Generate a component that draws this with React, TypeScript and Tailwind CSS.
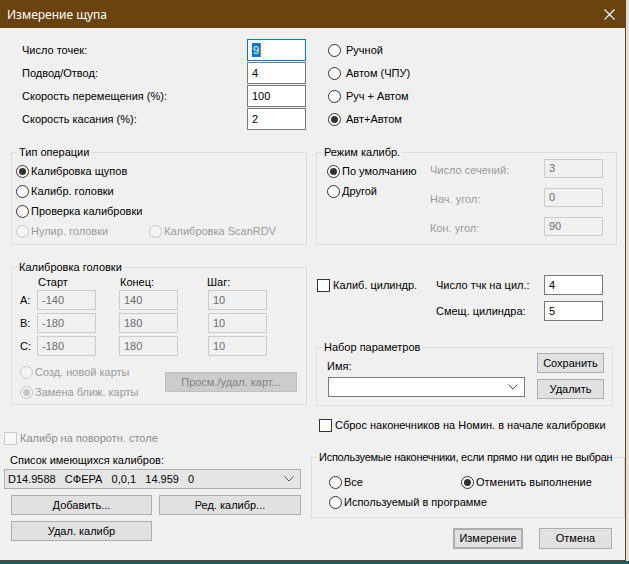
import type { ReactNode } from 'react';
import clsx from 'clsx';

const FONT = { fontFamily: '"Liberation Sans", Arial, sans-serif' };

function Radio({
  label,
  checked,
  disabled,
  gap = 'ml-[2px]',
}: {
  label: string;
  checked?: boolean;
  disabled?: boolean;
  gap?: string;
}) {
  return (
    <div className="flex h-[20px] items-center whitespace-nowrap">
      <span
        className={clsx(
          'flex h-[13px] w-[13px] shrink-0 items-center justify-center rounded-full border',
          disabled ? 'border-[#c4c4c4] bg-[#f4f4f4]' : 'border-[#333333] bg-white',
        )}
      >
        {checked && (
          <span className={clsx('h-[7px] w-[7px] rounded-full', disabled ? 'bg-[#c4c4c4]' : 'bg-[#333333]')} />
        )}
      </span>
      <span className={clsx(gap, disabled && 'text-[#9a9a9a]')}>{label}</span>
    </div>
  );
}

function Check({ label, disabled }: { label: string; disabled?: boolean }) {
  return (
    <div className="flex h-[14px] items-center whitespace-nowrap">
      <span
        className={clsx(
          'h-[13px] w-[13px] shrink-0 border',
          disabled ? 'border-[#cccccc] bg-[#f7f7f7]' : 'border-[#333333] bg-white',
        )}
      />
      <span className={clsx('ml-[3px]', disabled && 'text-[#8a8a8a]')}>{label}</span>
    </div>
  );
}

function Field({ value, disabled, h = 'h-[20px]' }: { value: string; disabled?: boolean; h?: string }) {
  return (
    <div
      className={clsx(
        'flex w-[59px] shrink-0 items-center border pl-[4px]',
        h,
        disabled ? 'border-[#cccccc] bg-[#f0f0f0] text-[#6d6d6d]' : 'border-[#7a7a7a] bg-white',
      )}
    >
      {value}
    </div>
  );
}

function Btn({ children, className, disabled }: { children: ReactNode; className?: string; disabled?: boolean }) {
  return (
    <div
      className={clsx(
        'flex h-[20px] shrink-0 items-center justify-center border',
        disabled ? 'border-[#bfbfbf] bg-[#cccccc] text-[#838383]' : 'border-[#adadad] bg-[#e1e1e1]',
        className,
      )}
    >
      {children}
    </div>
  );
}

function Chevron() {
  return (
    <svg width="10" height="6" viewBox="0 0 10 6" className="shrink-0">
      <polyline points="0.5,0.5 5,5 9.5,0.5" fill="none" stroke="#555555" strokeWidth="1" />
    </svg>
  );
}

function Group({
  title,
  className,
  titleClass,
  children,
}: {
  title: string;
  className?: string;
  titleClass?: string;
  children: ReactNode;
}) {
  return (
    <div className={clsx('border border-[#dcdcdc]', className)}>
      <div
        className={clsx(
          'relative -mt-[7px] -mb-[6px] ml-[5px] w-fit whitespace-nowrap bg-[#f0f0f0] px-[2px] leading-[13px]',
          titleClass,
        )}
      >
        {title}
      </div>
      {children}
    </div>
  );
}

const topRows = [
  { label: 'Число точек:', value: '9', radio: 'Ручной' },
  { label: 'Подвод/Отвод:', value: '4', radio: 'Автом (ЧПУ)' },
  { label: 'Скорость перемещения (%):', value: '100', radio: 'Руч + Автом' },
  { label: 'Скорость касания (%):', value: '2', radio: 'Авт+Автом', checked: true },
];

const headRows = [
  { axis: 'A:', start: '-140', end: '140', step: '10' },
  { axis: 'B:', start: '-180', end: '180', step: '10' },
  { axis: 'C:', start: '-180', end: '180', step: '10' },
];

export default function App() {
  return (
    <div className="flex h-[564px] w-[629px] flex-col bg-[#dedede] text-[11px] leading-[13px] text-black" style={FONT}>
      <div className="flex h-[561px] w-[626px] flex-col border-r border-b border-[#6a4311] bg-[#f0f0f0]">
        {/* title bar */}
        <div className="flex h-[28px] shrink-0 items-center justify-between bg-[#6a4311] pl-[7px] pr-[10px] text-white">
          <span className="text-[12px]" style={{ fontFamily: '"Noto Sans", "Open Sans", sans-serif' }}>
            Измерение щупа
          </span>
          <svg width="11" height="11" viewBox="0 0 11 11">
            <path d="M0.5 0.5 L10.5 10.5 M10.5 0.5 L0.5 10.5" stroke="white" strokeWidth="1.2" />
          </svg>
        </div>

        {/* top parameters */}
        <div className="mt-[11px] flex flex-col gap-y-[1px] pl-[22px]">
          {topRows.map((r, i) => (
            <div key={r.label} className="flex h-[22px] items-center">
              <span className="w-[225px] shrink-0">{r.label}</span>
              {i === 0 ? (
                <div className="flex h-[22px] w-[59px] shrink-0 items-center border border-[#0078d7] bg-white pl-[4px]">
                  <span className="bg-[#0078d7] px-[1px] leading-[14px] text-white">9</span>
                  <span className="h-[14px] w-[1px] bg-[#e06a1a]" />
                </div>
              ) : (
                <Field value={r.value} h="h-[22px]" />
              )}
              <div className="ml-[22px]">
                <Radio label={r.radio} checked={r.checked} gap="ml-[5px]" />
              </div>
            </div>
          ))}
        </div>

        <div className="mt-[22px] flex">
          {/* left column */}
          <div className="flex w-[310px] shrink-0 flex-col">
            <Group title="Тип операции" className="ml-[11px] h-[93px] w-[296px]">
              <div className="flex flex-col pl-[4px] pt-[8px]">
                <Radio label="Калибровка щупов" checked />
                <Radio label="Калибр. головки" />
                <Radio label="Проверка калибровки" />
                <div className="flex">
                  <div className="w-[133px]">
                    <Radio label="Нулир. головки" disabled />
                  </div>
                  <Radio label="Калибровка ScanRDV" disabled />
                </div>
              </div>
            </Group>

            <Group title="Калибровка головки" className="ml-[11px] mt-[22px] h-[138px] w-[296px]">
              <div className="flex flex-col pl-[8px] pt-[7px]">
                <div className="flex h-[14px] items-center">
                  <span className="ml-[18px] w-[82px]">Старт</span>
                  <span className="w-[87px]">Конец:</span>
                  <span>Шаг:</span>
                </div>
                <div className="mt-[1px] flex flex-col gap-y-[3px]">
                  {headRows.map((r) => (
                    <div key={r.axis} className="flex items-center">
                      <span className="w-[17px]">{r.axis}</span>
                      <Field value={r.start} disabled />
                      <div className="ml-[23px]">
                        <Field value={r.end} disabled />
                      </div>
                      <div className="ml-[30px]">
                        <Field value={r.step} disabled />
                      </div>
                    </div>
                  ))}
                </div>
                <div className="mt-[6px] flex">
                  <div className="w-[145px]">
                    <Radio label="Созд. новой карты" disabled />
                    <Radio label="Замена ближ. карты" checked disabled />
                  </div>
                  <Btn disabled className="mt-[10px] w-[132px]">
                    Просм./удал. карт...
                  </Btn>
                </div>
              </div>
            </Group>

            <div className="ml-[4px] mt-[26px]">
              <Check label="Калибр на поворотн. столе" disabled />
            </div>
            <div className="ml-[10px] mt-[9px]">Список имеющихся калибров:</div>
            <div className="ml-[4px] mt-[2px] flex h-[20px] w-[297px] items-center justify-between border border-[#adadad] bg-[#e5e5e5] pl-[3px] pr-[6px]">
              <span className="whitespace-pre">D14.9588   СФЕРА   0,0,1   14.959   0</span>
              <Chevron />
            </div>
            <div className="ml-[11px] mt-[6px] flex gap-x-[7px]">
              <Btn className="w-[141px]">Добавить...</Btn>
              <Btn className="w-[142px]">Ред. калибр...</Btn>
            </div>
            <Btn className="ml-[11px] mt-[6px] w-[141px]">Удал. калибр</Btn>
          </div>

          {/* right column */}
          <div className="flex flex-col">
            <Group title="Режим калибр." className="ml-[6px] h-[93px] w-[301px]">
              <div className="flex pl-[10px]">
                <div className="mt-[8px] w-[103px]">
                  <Radio label="По умолчанию" checked />
                  <Radio label="Другой" />
                </div>
                <div className="mt-[6px] flex flex-col gap-y-[10px]">
                  {[
                    ['Число сечений:', '3'],
                    ['Нач. угол:', '0'],
                    ['Кон. угол:', '90'],
                  ].map(([l, v]) => (
                    <div key={l} className="flex items-center">
                      <span className="w-[114px] pt-[3px] text-[#9a9a9a]">{l}</span>
                      <Field value={v} disabled h="h-[19px]" />
                    </div>
                  ))}
                </div>
              </div>
            </Group>

            <div className="mt-[30px] flex items-center pl-[7px]">
              <div className="w-[119px]">
                <Check label="Калиб. цилиндр." />
              </div>
              <span className="w-[108px]">Число тчк на цил.:</span>
              <Field value="4" />
            </div>
            <div className="mt-[6px] flex items-center pl-[126px]">
              <span className="w-[108px]">Смещ. цилиндра:</span>
              <Field value="5" />
            </div>

            <Group title="Набор параметров" className="ml-[6px] mt-[26px] h-[59px] w-[297px]">
              <div className="flex pl-[10px]">
                <div className="flex flex-col pt-[12px]">
                  <span className="h-[13px]">Имя:</span>
                  <div className="ml-[1px] mt-[4px] flex h-[20px] w-[197px] items-center justify-end border border-[#7a7a7a] bg-white pr-[6px]">
                    <Chevron />
                  </div>
                </div>
                <div className="ml-[12px] flex flex-col gap-y-[6px] pt-[5px]">
                  <Btn className="w-[67px]">Сохранить</Btn>
                  <Btn className="w-[67px]">Удалить</Btn>
                </div>
              </div>
            </Group>

            <div className="ml-[9px] mt-[12px]">
              <Check label="Сброс наконечников на Номин. в начале калибровки" />
            </div>

            <Group
              title="Используемые наконечники, если прямо ни один не выбран"
              titleClass="tracking-[-0.25px]"
              className="ml-[1px] mt-[25px] h-[61px] w-[314px]"
            >
              <div className="flex flex-col pl-[17px] pt-[14px]">
                <div className="flex">
                  <div className="w-[132px]">
                    <Radio label="Все" />
                  </div>
                  <Radio label="Отменить выполнение" checked />
                </div>
                <Radio label="Используемый в программе" />
              </div>
            </Group>

            <div className="ml-[143px] mt-[10px] flex gap-x-[16px]">
              <Btn className="h-[21px] w-[70px] border-2 border-[#0078d7]">Измерение</Btn>
              <Btn className="h-[21px] w-[73px]">Отмена</Btn>
            </div>
          </div>
        </div>
      </div>
      <div className="h-[3px] w-full bg-[#175c6a]" />
    </div>
  );
}
